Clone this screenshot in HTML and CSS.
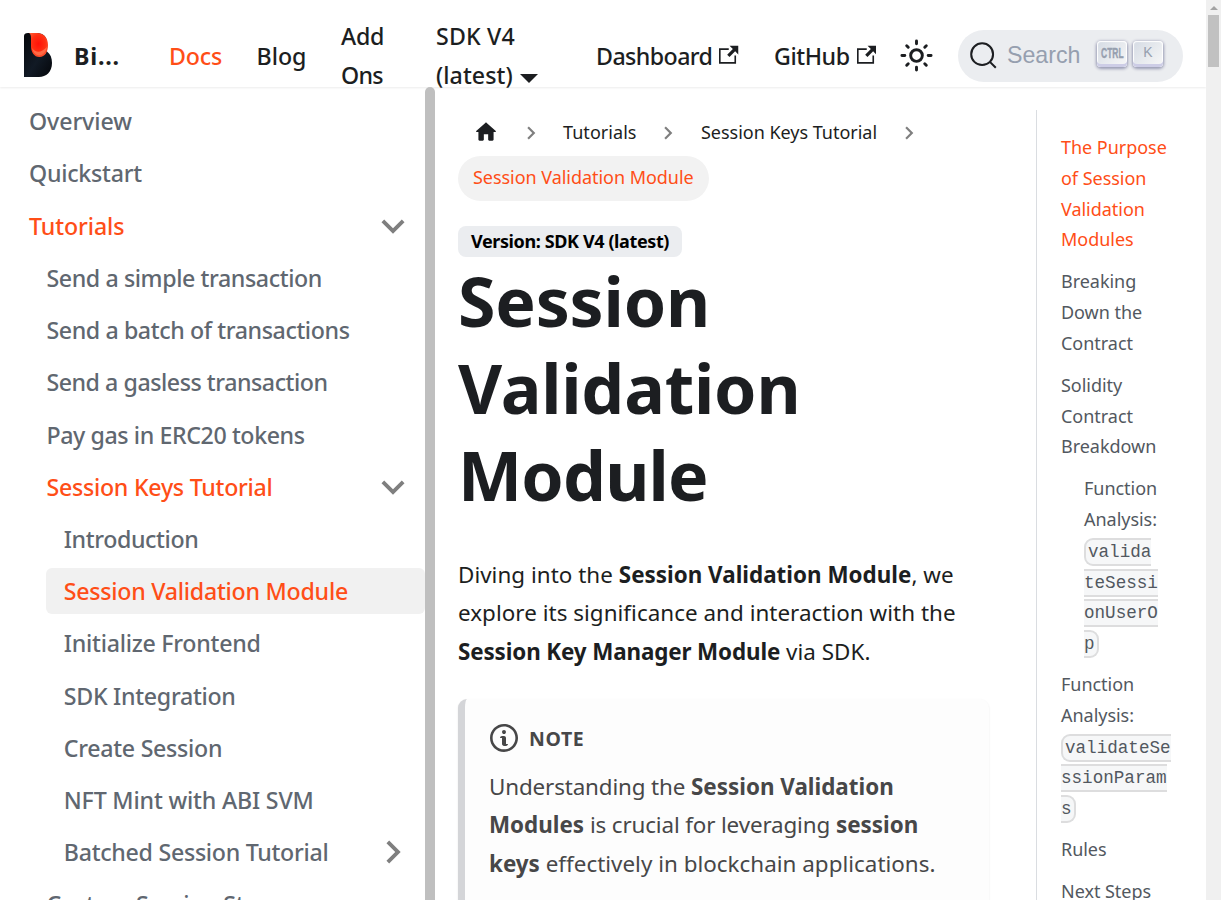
FILE: index.html
```html
<!DOCTYPE html>
<html lang="en">
<head>
<meta charset="utf-8">
<title>Session Validation Module</title>
<link rel="stylesheet" href="styles.css">
</head>
<body>
<svg width="0" height="0" class="defs">
  <symbol id="chev" viewBox="0 0 24 24"><path d="M7.41 15.41L12 10.83l4.59 4.58L18 14l-6-6-6 6z"/></symbol>
  <symbol id="ext" viewBox="0 0 24 24"><path d="M21 13v10h-21v-19h12v2h-10v15h17v-8h2zm3-12h-10.988l4.035 4-6.977 7.07 2.828 2.828 6.977-7.07 4.125 4.172v-11z"/></symbol>
</svg>
<div class="app">
  <header class="navbar">
    <svg class="logo" viewBox="0 0 28 44">
      <defs>
        <linearGradient id="body" x1="0" y1="0" x2="1" y2="1"><stop offset="0" stop-color="#05070b"/><stop offset=".55" stop-color="#111a25"/><stop offset="1" stop-color="#04060a"/></linearGradient>
        <radialGradient id="drop" cx=".5" cy=".45" r=".6"><stop offset="0" stop-color="#ff1208"/><stop offset=".6" stop-color="#ff2f12"/><stop offset="1" stop-color="#ff5a34"/></radialGradient>
      </defs>
      <path d="M0 3Q0 0 4 0H14Q23 1 23 10V18.500C26.500 21 28 25 28 30C28 39 22 44 15 44H0Z" fill="url(#body)"/>
      <path d="M5 0H13C20 0 24 5 24 12C24 19 21 24 15.500 24C10 24 7 19 7 13V5Q7 1 5 0Z" fill="url(#drop)"/>
      <path d="M8 15Q14 23 23 14Q21 22.500 15 22.500Q9.500 22 8 15Z" fill="#ff6a45"/>
    </svg>
    <b class="brand">Bi...</b>
    <a class="nav-docs">Docs</a>
    <a class="nav-blog">Blog</a>
    <a class="nav-addons"><span class="add">Add</span><br><span class="ons">Ons</span></a>
    <a class="nav-version"><span class="sdk">SDK V4</span><br><span class="latest">(latest)</span><i class="caret"></i></a>
    <a class="nav-dashboard"><span class="dash">Dashboard</span><svg class="ext"><use href="#ext"/></svg></a>
    <a class="nav-github"><span class="git">GitHub</span><svg class="ext"><use href="#ext"/></svg></a>
    <svg class="sun" viewBox="0 0 24 24"><circle cx="12" cy="12" r="4"/><path d="M12 2v2M12 20v2M2 12h2M20 12h2M5.280 5.280l1.060 1.060M17.660 17.660l1.060 1.060M5.280 18.720l1.060-1.060M17.660 6.340l1.060-1.060"/></svg>
    <div class="search">
      <svg class="glass" viewBox="0 0 20 20"><path d="M14.386 14.386l4.0877 4.0877-4.0877-4.0877c-2.9418 2.9419-7.7115 2.9419-10.6533 0-2.9419-2.9418-2.9419-7.7115 0-10.6533 2.9418-2.9419 7.7115-2.9419 10.6533 0 2.9419 2.9418 2.9419 7.7115 0 10.6533z"/></svg>
      <span class="search-text">Search</span>
      <kbd><span class="ctrl">CTRL</span></kbd>
      <kbd class="k">K</kbd>
    </div>
  </header>
  <div class="main">
    <nav class="sidebar">
      <div class="item l1 flat">Overview</div>
      <div class="item l1 qs">Quickstart</div>
      <div class="item l1 flat active">Tutorials<svg class="chev down"><use href="#chev"/></svg></div>
      <div class="item l2 tight">Send a simple transaction</div>
      <div class="item l2 tight">Send a batch of transactions</div>
      <div class="item l2 tighter">Send a gasless transaction</div>
      <div class="item l2 tight">Pay gas in ERC20 tokens</div>
      <div class="item l2 active">Session Keys Tutorial<svg class="chev down"><use href="#chev"/></svg></div>
      <div class="item l3 tight">Introduction</div>
      <div class="item l3 active current">Session Validation Module</div>
      <div class="item l3">Initialize Frontend</div>
      <div class="item l3 mid">SDK Integration</div>
      <div class="item l3 mid">Create Session</div>
      <div class="item l3 loose">NFT Mint with ABI SVM</div>
      <div class="item l3 mid">Batched Session Tutorial<svg class="chev right"><use href="#chev"/></svg></div>
      <div class="item l2 mid">Custom Session Storage</div>
    </nav>
    <div class="side-scroll"></div>
    <article class="content">
      <div class="crumbs">
        <svg class="home" viewBox="0 0 24 24"><path d="M10 19v-5h4v5c0 .55.45 1 1 1h3c.55 0 1-.45 1-1v-7h1.700c.46 0 .68-.57.33-.87L12.670 3.600c-.38-.34-.96-.34-1.340 0l-8.360 7.530c-.34.3-.13.87.33.87H5v7c0 .55.45 1 1 1h3c.55 0 1-.45 1-1z"/></svg>
        <svg class="sep s1"><use href="#chev"/></svg>
        <span class="c-tut">Tutorials</span>
        <svg class="sep s2"><use href="#chev"/></svg>
        <span class="c-keys">Session Keys Tutorial</span>
        <svg class="sep s2"><use href="#chev"/></svg>
      </div>
      <div class="pill">Session Validation Module</div>
      <div class="badge">Version: SDK V4 (latest)</div>
      <h1>Session<br>Validation<br><span class="h-module">Module</span></h1>
      <p class="intro">Diving into the <b class="b1">Session Validation Module</b>, we<br>explore its significance and interaction with the<br><b class="b2">Session Key Manager Module</b> via SDK.</p>
      <div class="note">
        <div class="note-head"><svg class="info" viewBox="0 0 14 16"><path fill-rule="evenodd" d="M6.300 5.690a.942.942 0 0 1-.28-.7c0-.28.09-.52.28-.7.19-.18.42-.28.7-.28.28 0 .52.09.7.28.18.19.28.42.28.7 0 .28-.09.52-.28.7a1 1 0 0 1-.7.3c-.28 0-.52-.11-.7-.3zM8 7.990c-.02-.25-.11-.48-.31-.69-.2-.19-.42-.3-.69-.31H6c-.27.02-.48.13-.69.31-.2.2-.3.44-.31.69h1v3c.02.27.11.5.31.69.2.2.42.31.69.31h1c.27 0 .48-.11.69-.31.2-.19.3-.42.31-.69H8V7.980v.01zM7 2.300c-3.140 0-5.700 2.540-5.700 5.680 0 3.140 2.560 5.700 5.700 5.700s5.700-2.550 5.700-5.700c0-3.150-2.560-5.690-5.700-5.690v.01zM7 .98c3.860 0 7 3.140 7 7s-3.140 7-7 7-7-3.120-7-7 3.140-7 7-7z"/></svg>NOTE</div>
        <p><span class="flush">Understanding the</span> <b class="b3">Session Validation<br>Modules</b> <span class="flush">is crucial for leveraging</span> <b class="b3">session<br>keys</b> <span class="last">effectively in blockchain applications.</span></p>
      </div>
    </article>
    <aside class="toc">
      <div class="t active">The Purpose<br>of Session<br>Validation<br>Modules</div>
      <div class="t">Breaking<br>Down the<br>Contract</div>
      <div class="t">Solidity<br>Contract<br>Breakdown</div>
      <div class="t sub">Function<br>Analysis:<br><code>valida<br>teSessi<br>onUserO<br>p</code></div>
      <div class="t">Function<br>Analysis:<br><code>validateSe<br>ssionParam<br>s</code></div>
      <div class="t">Rules</div>
      <div class="t">Next Steps</div>
    </aside>
  </div>
</div>
<div class="page-scroll"><i class="up"></i><div class="thumb"></div></div>
</body>
</html>
```
FILE: styles.css
```css
* { box-sizing: border-box; }
body { margin: 0; height: 900px; display: flex; overflow: hidden; background: #fff; color: #1c1e21; font-family: "Noto Sans", sans-serif; font-size: 22.4px; white-space: nowrap; }
svg { flex: none; fill: currentColor; }
.defs { position: absolute; }
.app { width: 1206px; height: 900px; display: flex; flex-direction: column; }

.navbar { flex: none; height: 87px; padding: 25px 23px 0 24px; display: flex; align-items: center; font-size: 23.2px; font-weight: 500; line-height: 39.3px; box-shadow: 0 1px 2px rgba(0,0,0,.08); }
.navbar a { flex: none; }
.logo { width: 28px; height: 44px; margin-top: -2px; }
.brand { width: 46px; margin: 1px 0 0 22px; letter-spacing: .8px; }
.nav-docs { width: 53px; margin: 1px 0 0 49px; color: #ff4e17; letter-spacing: -.2px; }
.nav-blog { width: 50px; margin: 1px 0 0 34.500px; letter-spacing: 0; }
.nav-addons { width: 44px; margin-left: 34.500px; }
.add { letter-spacing: -.3px; }
.ons { letter-spacing: -.7px; }
.nav-version { width: 104px; margin-left: 51px; }
.sdk { letter-spacing: .15px; }
.latest { letter-spacing: .05px; }
.caret { display: inline-block; margin-left: 7px; border: 9px solid transparent; border-top: 9px solid #1c1e21; border-bottom: 0; vertical-align: 1px; }
.nav-dashboard { width: 143px; margin: 1px 0 0 56px; }
.nav-github { width: 103px; margin: 1px 0 0 35px; }
.dash { letter-spacing: -.57px; }
.git { letter-spacing: -.45px; }
.ext { width: 19.5px; height: 19.5px; margin-left: 7px; vertical-align: 0; }
.sun { width: 35px; height: 35px; margin: -2px 0 0 22px; fill: none; stroke: #1c1e21; stroke-width: 2; stroke-linecap: round; }
.search { width: 225px; height: 52px; margin: -1px 0 0 auto; padding: 0 19px 0 11px; display: flex; align-items: center; flex: none; border-radius: 26px; background: #ebedf0; }
.glass { width: 29px; height: 29px; fill: none; stroke: #1c1e21; stroke-width: 1.4; stroke-linecap: round; }
.search-text { width: 75px; margin-left: 9px; font: 23.2px "Liberation Sans", sans-serif; color: #969faf; }
kbd { width: 30px; height: 26px; margin: -4px 0 0 15px; display: flex; align-items: center; justify-content: center; flex: none; border-radius: 4px; background: linear-gradient(-225deg, #d5dbe4, #f8f8f8); box-shadow: inset 0 -3px 0 0 #cdcde6, inset 0 0 1px 1px #fff, 0 1px 3px 1px rgba(30,35,90,.4); color: #969faf; font: 14px "Liberation Sans", sans-serif; padding-bottom: 2px; }
kbd.k { margin-left: 6px; padding-bottom: 4px; }
.ctrl { font-weight: 700; font-size: 14.500px; transform: scaleX(.58); -webkit-text-stroke: .4px #969faf; }

.main { flex: 1; min-height: 0; display: flex; overflow: hidden; }
.sidebar { width: 425px; padding: 11px 0 0 11.5px; flex: none; font-size: 23.2px; font-weight: 500; letter-spacing: -.26px; color: #606770; }
.item { height: 46.4px; margin-bottom: 5.83px; line-height: 46px; border-radius: 6px; padding-left: 17.5px; display: flex; align-items: center; flex: none; }
.l2 { margin-left: 17.4px; }
.l3 { margin-left: 34.8px; }
.l3.current { margin-left: 34.5px; padding-left: 17.8px; }
.flat { letter-spacing: -.1px; }
.qs { letter-spacing: -.25px; }
.tight { letter-spacing: -.4px; }
.tighter { letter-spacing: -.46px; }
.loose { letter-spacing: -.18px; }
.mid { letter-spacing: -.29px; }
.active { color: #ff4e17; }
.current { background: #f1f1f1; }
.chev { width: 46px; height: 46px; margin-left: auto; margin-right: 9px; color: #7f7f7f; }
.down { margin-top: 1px; transform: rotate(180deg); }
.right { transform: rotate(90deg); }
.side-scroll { width: 10px; flex: none; border-radius: 5px 5px 0 0; background: #bfbfbf; }

.content { width: 578px; margin-left: 23px; padding-top: 23px; flex: none; }
.crumbs { height: 45px; display: flex; align-items: center; font-size: 18px; }
.crumbs span { margin-top: -2px; }
.home { width: 26px; height: 26px; margin: -2px 0 0 15px; }
.sep { width: 26px; height: 26px; color: #7f7f7f; transform: rotate(90deg); }
.s1 { margin: 0 18px 0 19px; }
.s2 { margin: 0 20px 0 19px; }
.c-tut { width: 73px; letter-spacing: .05px; margin-left: 1px; }
.c-keys { width: 176px; letter-spacing: -.02px; }
.pill { width: 251px; height: 45px; margin-top: 1px; padding-left: 15px; border-radius: 23px; background: #f2f2f2; color: #ff4e17; font-size: 18px; line-height: 42px; letter-spacing: -.04px; }
.badge { width: 224px; height: 31px; margin-top: 25px; padding-left: 13px; border-radius: 8px; background: #ebedf0; color: #000; font-size: 18px; font-weight: 700; line-height: 31px; letter-spacing: -.39px; }
h1 { margin: 0; font-size: 68px; line-height: 87px; font-weight: 700; letter-spacing: -.2px; }
.h-module { letter-spacing: -.8px; }
p { margin: 0; line-height: 38.4px; }
.intro { margin-top: 38px; letter-spacing: .04px; }
.b1 { letter-spacing: .01px; }
.b2 { letter-spacing: -.12px; }
.b3 { letter-spacing: 0; }
.flush { letter-spacing: -.14px; }
.last { letter-spacing: .02px; }
.note { width: 531px; height: 260px; margin-top: 28px; padding: 23px 0 0 24px; border-left: 7px solid #d4d5d8; border-radius: 9px; background: #fdfdfd; box-shadow: 0 1px 2px rgba(0,0,0,.1); color: #474748; }
.note-head { height: 32px; margin-bottom: 13.700px; display: flex; align-items: center; font-size: 19.5px; font-weight: 700; letter-spacing: .6px; }
.info { width: 30px; height: 32px; margin-right: 10px; }

.toc { width: 170px; margin-top: 23px; padding: 22.2px 0 0 24px; border-left: 1px solid #dadde1; flex: none; font-size: 18px; line-height: 30.74px; letter-spacing: -.03px; color: #525860; }
.t { margin-bottom: 11.3px; }
.toc .active { color: #ff4e17; }
.sub { margin-left: 23px; }
code { padding: 2px 2px; border: 2px solid rgba(0,0,0,.1); border-radius: 9px; background: #f6f7f8; font: 17.600px "Liberation Mono", monospace; letter-spacing: 0; }

.page-scroll { width: 15px; background: #f0f0f0; display: flex; flex-direction: column; align-items: center; }
.up { margin-top: 6px; border: 4px solid transparent; border-top: 0; border-bottom: 4px solid #a3a3a3; }
.thumb { width: 11px; height: 52px; margin-top: 5px; background: #c1c1c1; }
```
